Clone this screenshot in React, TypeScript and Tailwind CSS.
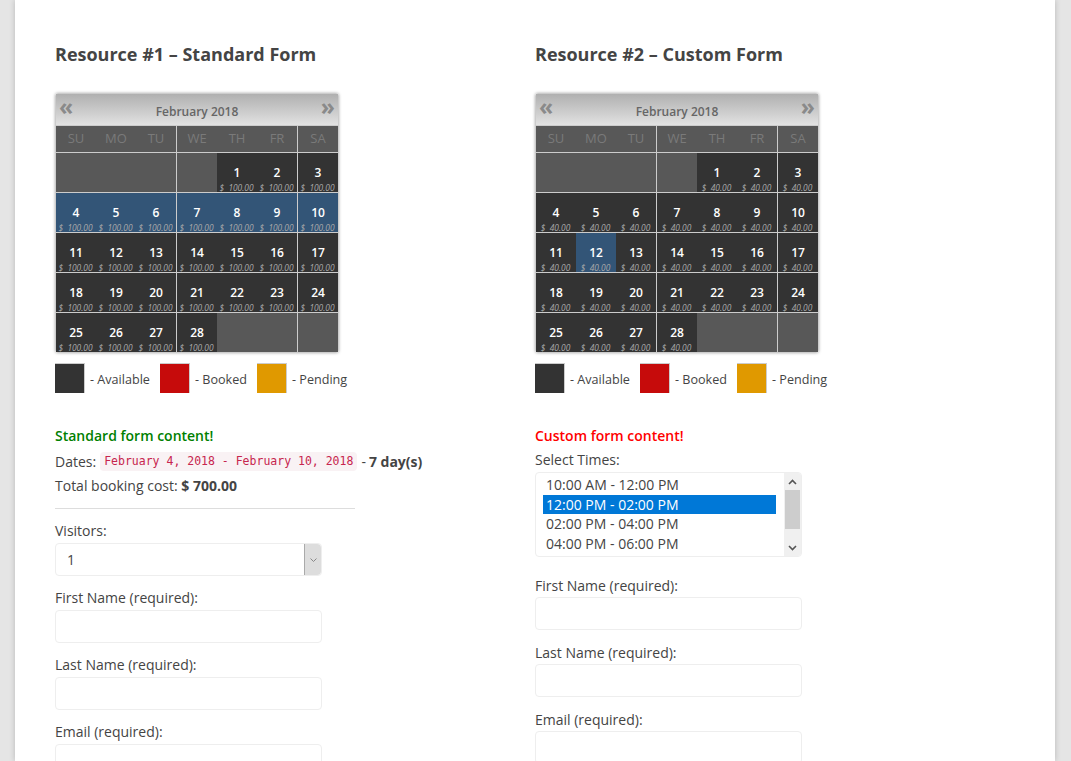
import React from "react";

type CellKind = "empty" | "avail" | "sel";

function Cell({ day, price, kind, edge }: { day?: number; price: string; kind: CellKind; edge: boolean }) {
  const bg = kind === "empty" ? "bg-[#585858]" : kind === "sel" ? "bg-[#335577]" : "bg-[#333333]";
  return (
    <div className={`relative h-[39px] w-[40px] shrink-0 pt-[12px] ${bg}`}>
      {day !== undefined && (
        <>
          <div className="text-center text-[12px] leading-[16px] font-semibold text-white">{day}</div>
          <div className="absolute bottom-[-1px] left-[-1px] right-0 whitespace-pre text-center text-[8.4px] leading-[11px] italic text-[#aaaaaa]">{`$  ${price}`}</div>
        </>
      )}
      {edge && <div className="absolute top-0 right-[-1px] h-full w-[1px] bg-[#cccccc]" />}
    </div>
  );
}

function Calendar({ price, selected }: { price: string; selected: number[] }) {
  const weeks: (number | undefined)[][] = [
    [undefined, undefined, undefined, undefined, 1, 2, 3],
    [4, 5, 6, 7, 8, 9, 10],
    [11, 12, 13, 14, 15, 16, 17],
    [18, 19, 20, 21, 22, 23, 24],
    [25, 26, 27, 28, undefined, undefined, undefined],
  ];
  const heads = ["SU", "MO", "TU", "WE", "TH", "FR", "SA"];
  const rowCls = "flex gap-0 border-t border-[#cccccc]";
  const spaced = (i: number) => (i === 3 || i === 6 ? "ml-[1px]" : "");
  return (
    <div className="w-[284px] rounded-[3px] border border-[#cccccc] shadow-[0_0_3px_rgba(0,0,0,0.35)]">
      <div className="relative h-[31px] bg-gradient-to-b from-[#b0b0b0] to-[#e2e2e2] text-center">
        <span className="absolute left-[3px] top-[-2px] text-[23px] leading-[28px] font-bold text-[#8a8a8a]">«</span>
        <span className="absolute right-[3px] top-[-2px] text-[23px] leading-[28px] font-bold text-[#8a8a8a]">»</span>
        <span className="block pt-[10px] text-[12px] leading-[16px] font-semibold text-[#666666]">February 2018</span>
      </div>
      <div className="flex bg-[#585858] border-t border-[#cccccc]">
        {heads.map((h, i) => (
          <div key={h} className={`relative h-[26px] w-[40px] shrink-0 text-center text-[13px] leading-[25px] text-[#7a7a7a] ${spaced(i)}`}>
            {h}
            {(i === 2 || i === 5) && <div className="absolute top-0 right-[-1px] h-full w-[1px] bg-[#cccccc]" />}
          </div>
        ))}
      </div>
      {weeks.map((w, ri) => (
        <div key={ri} className={rowCls}>
          {w.map((d, i) => (
            <div key={i} className={spaced(i)}>
              <Cell day={d} price={price} kind={d === undefined ? "empty" : selected.includes(d) ? "sel" : "avail"} edge={i === 2 || i === 5} />
            </div>
          ))}
        </div>
      ))}
    </div>
  );
}

function Legend() {
  const items: [string, string, string][] = [
    ["bg-[#333333]", "- Available", "w-[105px]"],
    ["bg-[#c60b0b]", "- Booked", "w-[97px]"],
    ["bg-[#e09900]", "- Pending", "w-[100px]"],
  ];
  return (
    <div className="mt-[10px] flex h-[30px] items-center">
      {items.map(([c, t, w]) => (
        <div key={t} className={`flex items-center ${w} shrink-0`}>
          <div className={`h-[30px] w-[30px] border-t border-r border-[#cccccc] ${c}`} />
          <span className="ml-[5px] h-[30px] pt-[2px] text-[12.6px] leading-[30px] whitespace-nowrap">{t}</span>
        </div>
      ))}
    </div>
  );
}

function Field({ label, centered }: { label: string; centered?: boolean }) {
  return (
    <div className="mt-[11px]">
      <div className={`h-[23px] ${centered ? "leading-[23px]" : "leading-[21px]"}`}>{label}</div>
      <div className="h-[33px] w-[267px] rounded-[4px] border border-[#eeeeee] bg-white" />
    </div>
  );
}

const Chevron = ({ up }: { up?: boolean }) => (
  <svg width="9" height="6" viewBox="0 0 9 6" className="block">
    <path d={up ? "M1 5 L4.5 1.5 L8 5" : "M1 1 L4.5 4.5 L8 1"} fill="none" stroke="#555" strokeWidth="1.6" />
  </svg>
);

export default function App() {
  return (
    <div className="h-[761px] overflow-hidden bg-[#e5e5e5] text-[14px] text-[#444444] [font-family:'Open_Sans',sans-serif]">
      <div className="ml-[15px] flex h-full w-[1040px] bg-white pl-[40px] pt-[42px] shadow-[0_0_6px_rgba(0,0,0,0.2)]">
        <div className="w-[480px] shrink-0">
          <h2 className="text-[18px] leading-[24px] font-bold">Resource #1 – Standard Form</h2>
          <div className="mt-[27px]">
            <Calendar price="100.00" selected={[4, 5, 6, 7, 8, 9, 10]} />
          </div>
          <Legend />
          <div className="mt-[32px] h-[22px] leading-[22px] font-semibold text-[#008000]">Standard form content!</div>
          <div className="mt-[2px] flex h-[25px] items-center whitespace-nowrap">
            Dates:
            <code className="ml-[4px] h-[19px] rounded-[4px] bg-[#f9f2f4] px-[4px] text-[11.5px] leading-[19px] text-[#c7254e] [font-family:'DejaVu_Sans_Mono',monospace]">
              February 4, 2018 - February 10, 2018
            </code>
            <span className="ml-[4px]">-</span>
            <b className="ml-[3px]">7 day(s)</b>
          </div>
          <div className="h-[23px] leading-[23px]">
            Total booking cost: <b>$ 700.00</b>
          </div>
          <div className="mt-[11px] h-[1px] w-[300px] bg-[#dddddd]" />
          <div className="mt-[11px] h-[23px] leading-[21px]">Visitors:</div>
          <div className="flex h-[33px] w-[267px] items-center justify-between rounded-[4px] border border-[#eeeeee] bg-white">
            <span className="pl-[11px]">1</span>
            <div className="flex h-full w-[17px] items-center justify-center rounded-r-[4px] border-l border-[#aaaaaa] bg-[#dddddd]">
              <svg width="7" height="4" viewBox="0 0 7 4"><path d="M0.5 0.5 L3.5 3.5 L6.5 0.5" fill="none" stroke="#888" /></svg>
            </div>
          </div>
          <Field label="First Name (required):" />
          <Field label="Last Name (required):" />
          <Field label="Email (required):" />
        </div>
        <div className="w-[480px] shrink-0">
          <h2 className="text-[18px] leading-[24px] font-bold">Resource #2 – Custom Form</h2>
          <div className="mt-[27px]">
            <Calendar price="40.00" selected={[12]} />
          </div>
          <Legend />
          <div className="mt-[32px] h-[22px] leading-[22px] font-semibold text-[#ff0000]">Custom form content!</div>
          <div className="mt-[1px] h-[24px] leading-[24px]">Select Times:</div>
          <div className="flex h-[85px] w-[267px] overflow-hidden rounded-[4px] border border-[#eeeeee] bg-white">
            <div className="flex-1 pl-[7px] pt-[2px]">
              {["10:00 AM - 12:00 PM", "12:00 PM - 02:00 PM", "02:00 PM - 04:00 PM", "04:00 PM - 06:00 PM"].map((t, i) => (
                <div key={t} className={`h-[19.6px] w-[233px] pl-[3px] leading-[19.6px] ${i === 1 ? "bg-[#0078d7] text-white" : ""}`}>{t}</div>
              ))}
            </div>
            <div className="flex w-[17px] flex-col bg-[#f0f0f0]">
              <div className="flex h-[17px] items-center justify-center"><Chevron up /></div>
              <div className="mx-[1px] h-[39px] bg-[#cdcdcd]" />
              <div className="flex-1" />
              <div className="flex h-[17px] items-center justify-center"><Chevron /></div>
            </div>
          </div>
          <div className="mt-[17px]" />
          <Field centered label="First Name (required):" />
          <Field centered label="Last Name (required):" />
          <Field centered label="Email (required):" />
        </div>
      </div>
    </div>
  );
}
